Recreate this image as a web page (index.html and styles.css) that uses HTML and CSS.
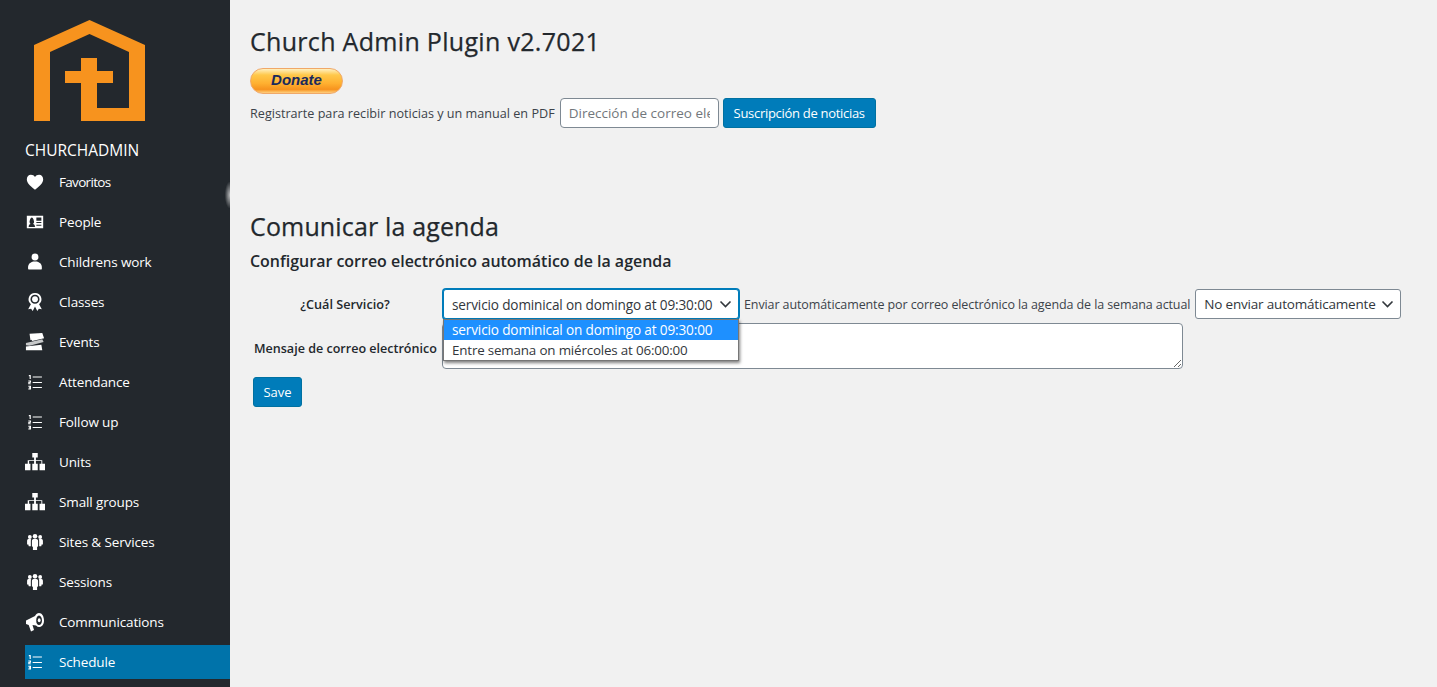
FILE: index.html
```html
<!DOCTYPE html>
<html lang="es">
<head>
<meta charset="utf-8">
<title>Church Admin Plugin</title>
<link rel="stylesheet" href="styles.css">
</head>
<body>
<div class="shell">
  <nav class="sidebar">
    <svg class="logo" viewBox="0 0 111 101" width="111" height="101"><path fill="#f7931e" d="M55.500 0 111 25V101H47V63H31V51H47V38H63V51H79V63H63V88H95V32L55.500 14 16 32V101H0V25Z"/></svg>
    <div class="brand">CHURCHADMIN</div>
    <ul class="menu">
      <li class="item"><svg class="ic" viewBox="-1 -1 22 22"><path d="M10 18.500C4 14 1 11 1 7c0-3 2-5 4.500-5C7.500 2 9 3 10 4.500 11 3 12.500 2 14.500 2 17 2 19 4 19 7c0 4-3 7-9 11.500z"/></svg><span class="tight">Favoritos</span></li>
      <li class="item"><svg class="ic" viewBox="-1 -1 22 22"><path fill-rule="evenodd" d="M1 3h18v14H1zM3 15.500h7c0-2.500-1-3-2.200-3.400.8-.5 1.200-1.200 1.200-2.100C9 8.800 8 5 6.500 5S4 8.800 4 10c0 .9.400 1.600 1.200 2.100C4 12.500 3 13 3 15.500zM11.500 5v3.500H17V5zM11.500 10v1.200H17V10zM11.500 13v1.200H17V13z"/></svg><span>People</span></li>
      <li class="item"><svg class="ic" viewBox="-1 -1 22 22"><circle cx="10" cy="4.500" r="3.800"/><path d="M2.500 18c-.5-5 1-7 5.500-8.500h4c4.500 1.500 6 3.500 5.500 8.500 0 .5-15 .5-15 0z"/></svg><span>Childrens work</span></li>
      <li class="item"><svg class="ic" viewBox="-1 -1 22 22"><path fill-rule="evenodd" d="M10 0a7 7 0 0 1 4.500 12.400L17.500 18l-3.200-.5L12.500 20 10 15l-2.500 5-1.800-2.500-3.200.5 3-5.600A7 7 0 0 1 10 0zm0 2a5 5 0 1 0 0 10 5 5 0 0 0 0-10z"/><circle cx="10" cy="7" r="3.200"/></svg><span>Classes</span></li>
      <li class="item"><svg class="ic" viewBox="0 0 22 20"><path d="M5 1l14-1 2 6-13 3-1-1.500-1 .5z"/><path d="M1 11l18-4 1.500 3L5 14l-4-.5z" opacity=".75"/><path d="M1 15l17-2 1 6H1z"/></svg><span>Events</span></li>
      <li class="item"><svg class="ic" viewBox="-3 -3 26 26"><use href="#numlist"/></svg><span>Attendance</span></li>
      <li class="item"><svg class="ic" viewBox="-3 -3 26 26"><use href="#numlist"/></svg><span>Follow up</span></li>
      <li class="item"><svg class="ic" viewBox="0 -1 22 22"><use href="#tree"/></svg><span>Units</span></li>
      <li class="item"><svg class="ic" viewBox="0 -1 22 22"><use href="#tree"/></svg><span>Small groups</span></li>
      <li class="item"><svg class="ic" viewBox="-2 -2 24 24"><use href="#group"/></svg><span>Sites &amp; Services</span></li>
      <li class="item"><svg class="ic" viewBox="-2 -2 24 24"><use href="#group"/></svg><span>Sessions</span></li>
      <li class="item"><svg class="ic" viewBox="0 0 20 20"><path fill-rule="evenodd" d="M14 1c3 0 5 3.500 5 7.500S17 15 14 15c-1 0-2-.5-3-1.500L7.500 13 9 18l-3 1.500-2.300-6.500-2.700-1V8.500L10 4c1-2 2.500-3 4-3zm0 2.500c-1.700 0-2.800 2.200-2.800 5s1.100 4.500 2.800 4.500 3-1.900 3-4.500-1.300-5-3-5z"/><ellipse cx="14.200" cy="8.300" rx="1.400" ry="2"/></svg><span>Communications</span></li>
      <li class="item active"><svg class="ic" viewBox="-3 -3 26 26"><use href="#numlist"/></svg><span>Schedule</span></li>
    </ul>
    <div class="smudge"></div>
    <svg class="defs" width="0" height="0" aria-hidden="true">
      <defs>
        <g id="numlist">
          <path d="M7 3h12v1.200H7zM7 10h12v1.200H7zM7 16.500h12v1.200H7z"/>
          <path d="M2 1h2.500v5H3V2.500H2zM1.300 8h3.500v3H3v.8h1.800v1.200H1.300v-3H3.200v-.8H1.300zM1.300 15h3.500v4.800H1.300v-1.200h1.900v-.6H2v-1.100h1.200v-.7H1.300z"/>
        </g>
        <g id="tree">
          <path d="M8 0h6v5h-2v3h7v4h3v7h-6v-7h2v-3h-6v3h2v7H8v-7h2v-3H4.500v3H6v7H0v-7h3V8h7V5H8z"/>
        </g>
        <g id="group">
          <circle cx="3.800" cy="4" r="2.300"/><circle cx="16.200" cy="4" r="2.300"/><circle cx="10" cy="3" r="2.700"/>
          <path d="M.5 8.500c0-1.500 1-2 3-2 1 0 1.500.2 2 .5-.5.5-.5 1-.5 2v6H2.500L2 13H.5zM19.500 8.500c0-1.500-1-2-3-2-1 0-1.500.2-2 .5.500.5.500 1 .5 2v6h2.500l.5-2h1.500z"/>
          <path d="M6.300 8.500c0-1.700 1.500-2.500 3.700-2.500s3.700.8 3.700 2.500V15l-1.200 1v3.500h-5V16l-1.200-1z"/>
        </g>
      </defs>
    </svg>
  </nav>
  <main class="main">
    <h1 class="title first">Church Admin Plugin v2.7021</h1>
    <button class="donate" type="button">Donate</button>
    <div class="signup">
      <span>Registrarte para recibir noticias y un manual en PDF</span>
      <input class="input" type="text" placeholder="Dirección de correo electrónico">
      <button class="btn news" type="button">Suscripción de noticias</button>
    </div>
    <h1 class="title second">Comunicar la agenda</h1>
    <h2 class="sub">Configurar correo electrónico automático de la agenda</h2>
    <div class="form">
      <label class="lbl center">¿Cuál Servicio?</label>
      <div class="row">
        <div class="selwrap">
          <div class="select focus"><span>servicio dominical on domingo at 09:30:00</span><svg class="chev" viewBox="0 0 12 8"><path d="M1 1.500 6 6.500 11 1.500" fill="none" stroke="currentColor" stroke-width="1.600"/></svg></div>
          <ul class="dropdown">
            <li class="opt sel">servicio dominical on domingo at 09:30:00</li>
            <li class="opt alt">Entre semana on miércoles at 06:00:00</li>
          </ul>
        </div>
        <span class="auto">Enviar automáticamente por correo electrónico la agenda de la semana actual</span>
        <div class="select plain"><span>No enviar automáticamente</span><svg class="chev" viewBox="0 0 12 8"><path d="M1 1.500 6 6.500 11 1.500" fill="none" stroke="currentColor" stroke-width="1.600"/></svg></div>
      </div>
      <label class="lbl low">Mensaje de correo electrónico</label>
      <textarea class="area"></textarea>
    </div>
    <button class="btn save" type="button">Save</button>
  </main>
</div>
</body>
</html>
```
FILE: styles.css
```css
* { box-sizing: border-box; }
html, body { margin: 0; height: 100%; overflow: hidden; }
body { background: #f1f1f1; color: #3c434a; font-family: "Open Sans", "Noto Sans", sans-serif; font-size: 13px; }
.shell { display: flex; height: 687px; }
.sidebar { position: relative; width: 230px; flex: none; background: #23282d; color: #fff; padding: 20px 0 0 25px; overflow: hidden; }
.smudge { position: absolute; right: 0; top: 182px; width: 5px; height: 26px; background: radial-gradient(ellipse at right, rgba(240,240,240,.75), rgba(240,240,240,0) 75%); }
.logo { display: block; margin-left: 9px; }
.brand { margin-top: 19px; font-size: 15.500px; line-height: 20px; height: 20px; font-weight: 500; }
.menu { list-style: none; margin: 5px 0 0; padding: 0; display: flex; flex-direction: column; gap: 6px; }
.item { height: 34px; display: flex; align-items: center; gap: 14px; font-size: 13.500px; letter-spacing: -.13px; }
.item.active { background: #0073aa; }
.tight { letter-spacing: -.68px; }
.ic { width: 20px; height: 20px; flex: none; fill: #fff; }
.defs { position: absolute; }
.main { flex: 1; min-width: 0; padding: 0 20px; }
.title { margin: 0; font-weight: 500; font-size: 25px; line-height: 30px; color: #23282d; letter-spacing: .15px; -webkit-text-stroke: .25px #23282d; }
.title.first { margin-top: 26px; letter-spacing: .31px; }
.donate { display: block; margin-top: 12px; width: 93px; height: 26px; border: 1px solid #f0a868; border-radius: 13px; padding: 0 0 3px; background: linear-gradient(#fff0c0 0, #ffc84a 25%, #ffb030 60%, #f7931e 85%, #ffd080 100%); color: #1a2a5c; font: italic 700 15px "Liberation Sans", sans-serif; }
.signup { display: flex; align-items: center; margin-top: 4px; height: 30px; font-size: 12.630px; }
.input { width: 159px; height: 30px; margin: 0 4px 0 5px; border: 1px solid #7e8993; border-radius: 4px; background: #fff; padding: 0 8px; font: 13.500px "Open Sans", "Noto Sans", sans-serif; color: #32373c; }
.input::placeholder { color: #72777c; opacity: 1; }
.btn { height: 30px; border: 1px solid #0071a1; border-radius: 3px; background: #007cba; color: #fff; padding: 0; font: 13px "Open Sans", "Noto Sans", sans-serif; }
.news { width: 153px; letter-spacing: -.3px; }
.second { margin-top: 83px; }
.sub { margin: 9px 0 0; font-size: 15.970px; line-height: 22px; font-weight: 600; color: #23282d; }
.form { display: grid; grid-template-columns: 190px 1fr; row-gap: 4px; margin: 17px 0 0 3px; width: 1150px; align-items: center; }
.lbl { font-weight: 600; font-size: 12.700px; color: #23282d; white-space: nowrap; }
.lbl.center { text-align: center; padding-right: 6px; }
.lbl.low { padding: 4px 0 0 1px; font-size: 12.560px; }
.row { display: flex; align-items: center; gap: 5px; height: 30px; }
.selwrap { position: relative; }
.select { height: 30px; display: flex; align-items: center; justify-content: space-between; background: #fff; border: 1px solid #7e8993; border-radius: 3px; padding: 0 6px 0 8px; font-size: 13.600px; letter-spacing: -.15px; color: #32373c; white-space: nowrap; }
.select.focus { width: 296px; border-color: #007cba; box-shadow: 0 0 0 1px #007cba; }
.select.plain { width: 206px; font-size: 13.500px; letter-spacing: -.19px; }
.chev { width: 13px; height: 8px; flex: none; color: #32373c; }
.auto { font-size: 12.500px; letter-spacing: -.105px; white-space: nowrap; }
.dropdown { position: absolute; left: 0; top: 30px; width: 296px; margin: 0; padding: 0; list-style: none; background: #fff; border: 1px solid #767676; box-shadow: 1px 2px 3px rgba(0,0,0,.5); z-index: 2; }
.opt { height: 20px; line-height: 20px; padding-left: 8px; font-size: 13.600px; letter-spacing: -.15px; color: #32373c; white-space: nowrap; }
.opt.sel { background: #1e90ff; color: #fff; }
.opt.alt { font-size: 13.400px; letter-spacing: -.18px; }
.area { width: 741px; height: 46px; border: 1px solid #7e8993; border-radius: 4px; background: #fff; display: block; resize: both; margin-left: -1px; }
.save { display: block; margin: 8px 0 0 3px; width: 49px; }
```
